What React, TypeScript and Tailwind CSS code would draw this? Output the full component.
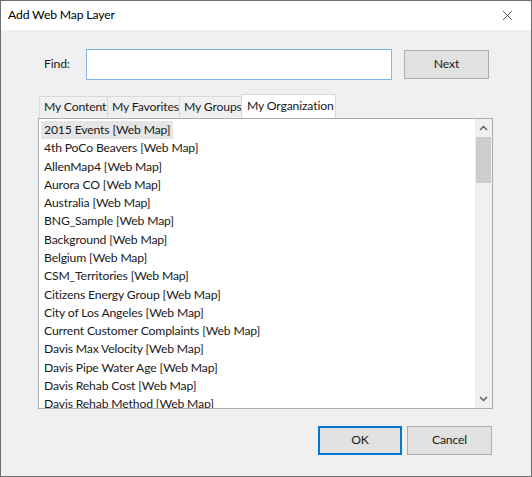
import { X } from "lucide-react";

const items = [
  "2015 Events [Web Map]",
  "4th PoCo Beavers [Web Map]",
  "AllenMap4 [Web Map]",
  "Aurora CO [Web Map]",
  "Australia [Web Map]",
  "BNG_Sample [Web Map]",
  "Background [Web Map]",
  "Belgium [Web Map]",
  "CSM_Territories [Web Map]",
  "Citizens Energy Group [Web Map]",
  "City of Los Angeles [Web Map]",
  "Current Customer Complaints [Web Map]",
  "Davis Max Velocity [Web Map]",
  "Davis Pipe Water Age [Web Map]",
  "Davis Rehab Cost [Web Map]",
  "Davis Rehab Method [Web Map]",
];

const tabs = ["My Content", "My Favorites", "My Groups", "My Organization"];
const tabWidths = ["w-[68px]", "w-[72px]", "w-[62px]", "w-[95px]"];

export default function App() {
  return (
    <div
      className="flex h-[477px] w-[532px] flex-col border border-[#6e6e6e] bg-[#f0f0f0] text-[12.2px] tracking-[-0.15px] text-[#1a1a1a]"
      style={{ fontFamily: 'Lato, "Noto Sans", sans-serif' }}
    >
      {/* title bar */}
      <div className="flex h-[29px] shrink-0 items-center justify-between bg-white pl-[7px] pr-[15px]">
        <span className="text-black">Add Web Map Layer</span>
        <X className="h-[17px] w-[17px]" strokeWidth={1} />
      </div>

      <div className="flex flex-1 flex-col">
        {/* find row */}
        <div className="mt-[19px] flex items-center pl-[43px]">
          <span className="w-[42px]">Find:</span>
          <div className="h-[31px] w-[306px] border border-[#7eb4ea] bg-white" />
          <button className="ml-[12px] h-[29px] w-[85px] border border-[#adadad] bg-[#e1e1e1]">
            Next
          </button>
        </div>

        {/* tabs */}
        <div className="mt-[14px] flex items-end pl-[38px]">
          {tabs.map((t, i) =>
            i === tabs.length - 1 ? (
              <div
                key={t}
                className={`${tabWidths[i]} flex h-[24px] items-center whitespace-nowrap border border-b-0 border-[#d9d9d9] bg-white pl-[5px]`}
              >
                {t}
              </div>
            ) : (
              <div
                key={t}
                className={`${tabWidths[i]} flex h-[22px] items-center whitespace-nowrap border border-r-0 border-b-0 border-[#d9d9d9] bg-[#f0f0f0] pl-[4px]`}
              >
                {t}
              </div>
            )
          )}
        </div>

        {/* list */}
        <div className="ml-[37px] flex h-[291px] w-[455px] border border-[#abadb3] bg-white">
          <div className="flex-1 overflow-hidden pt-[2px] pl-[2px]">
            {items.map((it, i) => (
              <div key={it} className="flex h-[18.27px] items-center">
                <span
                  className={`whitespace-nowrap px-[3px] leading-[18px] ${
                    i === 0 ? "bg-[#e5e5e5]" : ""
                  }`}
                >
                  {it}
                </span>
              </div>
            ))}
          </div>
          <div className="flex w-[17px] flex-col bg-[#f0f0f0]">
            <div className="flex h-[18px] items-center justify-center">
              <svg width="9" height="6" viewBox="0 0 9 6">
                <path d="M1 5 L4.5 1.5 L8 5" fill="none" stroke="#606060" strokeWidth="1.5" />
              </svg>
            </div>
            <div className="mx-[1px] h-[46px] bg-[#cdcdcd]" />
            <div className="flex-1" />
            <div className="flex h-[18px] items-center justify-center">
              <svg width="9" height="6" viewBox="0 0 9 6">
                <path d="M1 1 L4.5 4.5 L8 1" fill="none" stroke="#606060" strokeWidth="1.5" />
              </svg>
            </div>
          </div>
        </div>

        {/* bottom buttons */}
        <div className="mt-[17px] flex pl-[317px]">
          <button className="h-[29px] w-[84px] border-2 border-[#0078d7] bg-[#e1e1e1]">
            OK
          </button>
          <button className="ml-[5px] h-[29px] w-[85px] border border-[#adadad] bg-[#e1e1e1]">
            Cancel
          </button>
        </div>
      </div>
    </div>
  );
}
